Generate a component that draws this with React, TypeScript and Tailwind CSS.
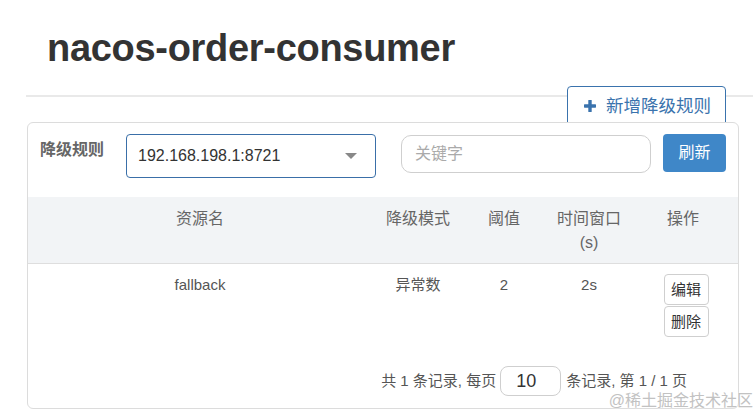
const cols = 'grid grid-cols-[344px_92px_80px_90px_1fr]'

const rows = [{ resource: 'fallback', grade: '异常数', count: '2', window: '2s' }]

function PlusIcon() {
  return (
    <svg width="12" height="12" viewBox="0 0 12 12" aria-hidden="true">
      <rect x="4.3" y="0" width="3.4" height="12" rx="0.6" fill="#3a73ad" />
      <rect x="0" y="4.3" width="12" height="3.4" rx="0.6" fill="#3a73ad" />
    </svg>
  )
}

export default function App() {
  return (
    <div className="relative h-[415px] w-[753px] overflow-hidden bg-white font-['Liberation_Sans','Noto_Sans_CJK_SC',sans-serif]">
      <h1 className="pl-[47px] pt-[27px] text-[38px] font-bold leading-[42px] tracking-[-0.3px] text-[#333]">
        nacos-order-consumer
      </h1>

      <div className="pl-[26px]">
        <div className="mt-[26px] h-[2px] bg-[#e9e9e9]" />

        <div className="-mt-[11px] flex justify-end pr-[27px]">
          <button className="flex h-[40px] items-center gap-[10px] rounded-[4px] border border-[#3a73ad] bg-white pl-[16px] pr-[14px] text-[17.5px] text-[#3a73ad]">
            <PlusIcon />
            新增降级规则
          </button>
        </div>

        <div className="relative z-10 -mt-[4px] ml-px mr-[14px] rounded-[6px] border border-[#dcdcdc] bg-white">
          <div className="flex items-start pb-[19px] pl-[12px] pr-[12px] pt-[11px]">
            <div className="w-[86px] pt-[4px] text-[16px] font-bold leading-[24px] text-[#666]">降级规则</div>
            <div className="flex h-[44px] w-[250px] items-center justify-between rounded-[4px] border border-[#3a6fa8] pl-[11px] pr-[18px] text-[16px] text-[#333]">
              <span>192.168.198.1:8721</span>
              <svg width="12" height="6" viewBox="0 0 12 6" aria-hidden="true">
                <path d="M0 0h12L6 6z" fill="#888" />
              </svg>
            </div>
            <div className="ml-[25px] mt-px flex h-[38px] w-[250px] items-center rounded-[10px] border border-[#cfcfcf] pl-[13px] text-[16px] text-[#aaa]">
              关键字
            </div>
            <button className="ml-[12px] h-[38px] w-[63px] rounded-[4px] bg-[#3f87c8] text-[16px] text-white">刷新</button>
          </div>

          <div className={`${cols} h-[67px] border-b border-[#dedede] bg-[#f2f4f6] pt-[10px] text-center text-[16px] leading-[24px] text-[#666]`}>
            <div>资源名</div>
            <div>降级模式</div>
            <div>阈值</div>
            <div>
              时间窗口
              <br />
              (s)
            </div>
            <div className="pr-[6px]">操作</div>
          </div>

          {rows.map((r) => (
            <div key={r.resource} className={`${cols} pt-[9px] text-center text-[15px] leading-[24px] text-[#555]`}>
              <div>{r.resource}</div>
              <div>{r.grade}</div>
              <div>{r.count}</div>
              <div>{r.window}</div>
              <div className="flex flex-col items-center gap-[1px] pt-px">
                <button className="h-[31px] w-[45px] rounded-[4px] border border-[#cfcfcf] bg-white text-[15px] text-[#333]">编辑</button>
                <button className="h-[31px] w-[45px] rounded-[4px] border border-[#cfcfcf] bg-white text-[15px] text-[#333]">删除</button>
              </div>
            </div>
          ))}

          <div className="mt-[29px] flex items-center justify-end pb-[12px] pr-[51px] text-[15px] text-[#555]">
            <span>共 1 条记录, 每页</span>
            <div className="ml-[4px] mr-[5px] flex h-[30px] w-[61px] items-center rounded-[8px] border border-[#cfcfcf] pl-[15px] text-[18px] text-[#333]">
              10
            </div>
            <span>条记录, 第 1 / 1 页</span>
          </div>
        </div>
      </div>

      <div className="absolute bottom-[4px] right-0 z-20 text-[16px] leading-[20px] text-[#c2c2c2] [text-shadow:0_0_2px_#fff]">
        @稀土掘金技术社区
      </div>
    </div>
  )
}
